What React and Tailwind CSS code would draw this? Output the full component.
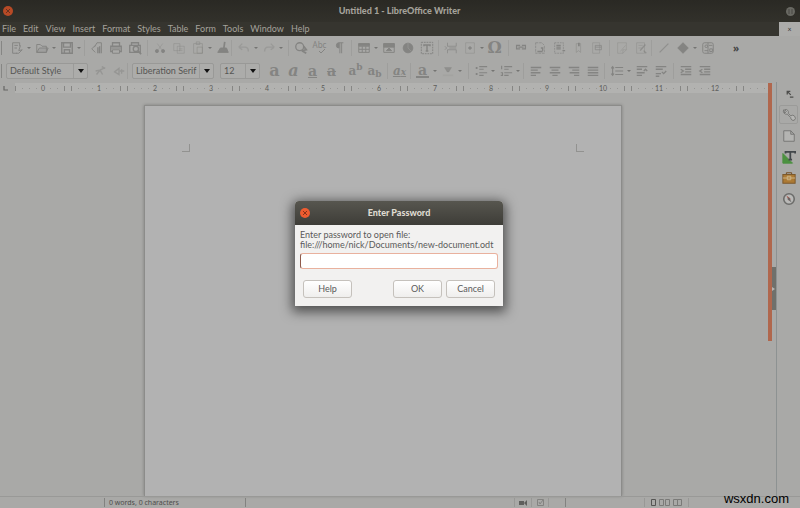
import React from "react";

const ICONS = {
  new: <><path d="M3 2h8v4M3 2v12h5" /><path d="M5 5h4M5 8h3" /><path d="M12 5l-2 6 4-1-4 4H7" /></>,
  open: <><path d="M2 13V4h4l2 2h5v7z" /><path d="M2 13l3-5h10l-2 5z" fill="currentColor" fillOpacity=".25" /></>,
  save: <><path d="M2 2h12v12H2z" strokeWidth="1.6" /><path d="M4 2v5h8V2M5 14v-4h6v4" strokeWidth="1.6" /></>,
  pdf: <><path d="M8 2h5v12M8 2L5 7M2 9l4-4M2 9l4 4" /><path d="M9 7v7M11 6v8" strokeWidth="1.6" /></>,
  print: <><path d="M4 6V2h8v4M2 6h12v6H2z" strokeWidth="1.5" /><path d="M4 10h8v4H4z" fill="#aaaaa8" /><path d="M3 8h10" /></>,
  preview: <><path d="M4 5V2h8v3M2 5h12v8H2z" strokeWidth="1.5" /><circle cx="9" cy="9" r="3" strokeWidth="1.5" /><path d="M11 11l4 4" strokeWidth="1.8" /></>,
  cut: <g strokeOpacity=".8"><path d="M5 3l5 7M11 3l-5 7" strokeOpacity=".4" /><circle cx="4.500" cy="11.500" r="1.800" fill="currentColor" /><circle cx="11.500" cy="11.500" r="1.800" fill="currentColor" /></g>,
  copy: <g strokeOpacity=".4"><path d="M2 3h7v8H2zM6 6h8v8H6z" /><path d="M8 9h4M8 11h4" /></g>,
  paste: <g strokeOpacity=".5"><path d="M3 3h10v11H3zM6 1h4v3H6z" /><path d="M7 7h6v7H7z" /></g>,
  clone: <><path d="M10 1l-1 7" strokeWidth="2" /><path d="M5 8h7l2 5H2z" fill="currentColor" /></>,
  undo: <path d="M2 7l4-4M2 7l4 3M2 7h7c3 0 4 2 4 5" strokeWidth="1.600" strokeOpacity=".4" />,
  redo: <path d="M14 7l-4-4M14 7l-4 3M14 7H7c-3 0-4 2-4 5" strokeWidth="1.600" strokeOpacity=".4" />,
  find: <><circle cx="6.500" cy="6.500" r="4.500" strokeWidth="1.500" /><path d="M9 11l5 3M11 6l3 4-5 1" strokeWidth="2" /></>,
  pilcrow: <><path d="M8 2a3 3 0 0 0 0 6z" fill="currentColor" /><path d="M8 2h5M9 2v12M11 2v12" /></>,
  table: <><path d="M2 3h12v10H2zM2 6h12M2 9.500h12M6 6v7M10 6v7" /><path d="M2 3h12v2H2z" fill="currentColor" /></>,
  image: <><path d="M2 3h12v10H2z" /><path d="M2 3h12v4H2z" fill="currentColor" /><path d="M5 11h6l-3-3z" fill="currentColor" /></>,
  chart: <><circle cx="8" cy="8" r="5.500" fill="currentColor" /><path d="M8 8V2M8 8l4 4" stroke="#939391" /></>,
  textbox: <><path d="M1.500 1.500h13v13h-13z" strokeDasharray="2 1" /><path d="M4.500 6V4.500h7V6M8 4.500v7M6.500 11.500h3" strokeWidth="1.600" /></>,
  pagebreak: <path d="M4 2v4h10V2M4 14v-4h10v4M6 8h8M1 6l2 2-2 2" strokeOpacity=".7" />,
  field: <><path d="M3 2h10v12H3z" strokeOpacity=".4" /><path d="M6 8h4M8 6v4" strokeWidth="1.600" /></>,
  link: <path d="M7 5H3v4h4M9 5h4v4H9M5 7h6" strokeWidth="1.500" />,
  footnote: <><path d="M3 2h7l3 3v9H3z" strokeDasharray="3 1" strokeOpacity=".7" /><path d="M5 12h6M9 8h2v3" strokeWidth="1.500" /></>,
  endnote: <><path d="M3 2h10v12H3z" strokeDasharray="2 1" strokeOpacity=".7" /><path d="M5 5h5M5 7h5M5 9h5M12 11h3" strokeWidth="1.400" /></>,
  bookmark: <><path d="M6 3h5v10l-2.500-2L6 13z" strokeOpacity=".5" /><path d="M9 2v4" strokeWidth="2" /></>,
  crossref: <><path d="M3 2h8v12H3z" strokeOpacity=".4" /><path d="M6 5h7v5H6zM6 7h7" strokeOpacity=".7" /></>,
  comment: <path d="M3 2h10v8l-4 4H3zM9 14v-4h4M6 12l6-7" strokeOpacity=".35" />,
  track: <><path d="M3 2h9v12H3zM5 5h5M5 8h4" strokeOpacity=".4" /><path d="M7 11l6-7M11 11l3 3" strokeWidth="1.600" strokeOpacity=".7" /></>,
  line: <path d="M3 13L13 3" strokeWidth="1.400" strokeOpacity=".7" />,
  diamond: <path d="M8 2l6 6-6 6-6-6z" fill="currentColor" />,
  draw: <><rect x="2" y="2" width="12" height="12" rx="2" /><circle cx="6" cy="6" r="1.500" /><path d="M9 5h4M4 11h4M10 9h3v3h-3zM8 2v12" /></>,
  styleUpdate: <path d="M4 12l4-5 4-2M8 7l-5 1M8 7l3 5M10 3l4 2" strokeWidth="1.600" strokeOpacity=".5" />,
  styleNew: <path d="M3 9l5-4v7zM9 8h5M11 6v5" strokeWidth="1.500" strokeOpacity=".5" />,
  highlight: <><path d="M4 4h8l-3 5H7z" fill="currentColor" fillOpacity=".7" strokeOpacity=".3" /><path d="M2 13h12" strokeWidth="2" strokeOpacity=".15" /></>,
  bullets: <><path d="M6 3h9M6 6h5M6 10h9M6 13h5" strokeWidth="1.300" /><path d="M2 4.500h2M2 11.500h2" strokeWidth="2.400" /></>,
  numbers: <><path d="M6 3h9M6 6h5M6 10h9M6 13h5" strokeWidth="1.300" /><path d="M3 2v4M2 10h2v3H2" strokeWidth="1.300" /></>,
  left: <path d="M2 4h12M2 7h8M2 10h11M2 13h6" strokeWidth="1.600" />,
  center: <path d="M2 4h12M4 7h8M2 10h12M5 13h6" strokeWidth="1.600" />,
  right: <path d="M2 4h12M6 7h8M3 10h11M8 13h6" strokeWidth="1.600" />,
  justify: <path d="M2 4h12M2 7h12M2 10h12M2 13h12" strokeWidth="1.600" />,
  spacing: <path d="M6 4h9M6 8h9M6 12h9M3 3v10M1.500 5L3 3l1.500 2M1.500 11L3 13l1.500-2" strokeWidth="1.300" />,
  paraUp: <path d="M2 3h12M2 6h6M2 10h9M2 13h6M10 8l2-2 2 2" strokeWidth="1.500" />,
  paraDown: <path d="M2 3h12M2 6h8M2 11h6M2 14h4M9 9l2 2 3-3" strokeWidth="1.500" />,
  indent: <path d="M2 3h12M7 6h7M7 9h7M2 12h12M2 6l3 2-3 2" strokeWidth="1.500" />,
  outdent: <path d="M2 3h12M7 6h7M7 9h7M2 12h12M5 6L2 8l3 2" strokeWidth="1.500" />,
};

const GLYPHS = {
  bold: <span className="text-base font-bold">a</span>,
  italic: <span className="text-base font-bold italic">a</span>,
  underline: <span className="text-sm font-bold underline">a</span>,
  strike: <span className="text-sm font-bold line-through">a</span>,
  superscript: <span className="text-xs font-bold">a<sup className="text-[9px]">b</sup></span>,
  subscript: <span className="text-xs font-bold">a<sub className="text-[9px]">b</sub></span>,
  clear: <span className="text-xs font-bold italic underline">a<span className="text-[9px]">x</span></span>,
  color: <span className="border-b-2 border-[#848482] px-0.5 text-sm leading-3 font-bold">a</span>,
  omega: <span className="text-base font-bold">Ω</span>,
  spelling: (
    <span className="flex flex-col items-end font-['Noto_Sans',sans-serif] text-[8px] leading-[8px]">
      Abc
      <svg width="8" height="5" viewBox="0 0 8 5"><path d="M1 2l2 2 4-4" fill="none" stroke="currentColor" /></svg>
    </span>
  ),
};

const STANDARD = [
  { w: "w-20", items: ["new", "|", "open", "|", "save", "|"] },
  { w: "w-[63px]", items: ["pdf", "print", "preview"] },
  { w: "w-[84px]", items: ["cut", "copy", "paste", "|", "clone"] },
  { w: "w-[57px]", items: ["undo", "|", "redo", "|"] },
  { w: "w-[63px]", items: ["find", "spelling", "pilcrow"] },
  { w: "w-[87px]", items: ["table", "|", "image", "chart", "textbox"] },
  { w: "w-[70px]", items: ["pagebreak", "field", "|", "omega"] },
  { w: "w-[101px]", items: ["link", "footnote", "endnote", "bookmark", "crossref"] },
  { w: "w-[42px]", items: ["comment", "track"] },
];

const FORMATTING = [
  { w: "w-[81px]", items: ["bold", "italic", "underline", "strike"], open: true },
  { w: "w-11", items: ["superscript", "subscript"] },
  { w: "w-[23px]", items: ["clear"] },
  { w: "w-[58px]", items: ["color", "|", "highlight", "|"] },
  { w: "w-[55px]", items: ["bullets", "|", "numbers", "|"] },
  { w: "w-[81px]", items: ["left", "center", "right", "justify"] },
  { w: "w-[69px]", items: ["spacing", "|", "paraUp", "paraDown"] },
];

function Tool({ name }) {
  if (name === "|")
    return (
      <button aria-label="More options" className="flex w-[6px] shrink-0 items-center justify-center">
        <svg width="4" height="2" viewBox="0 0 4 2"><path d="M0 0h4L2 2z" fill="#757573" /></svg>
      </button>
    );
  return (
    <button aria-label={name} className="flex h-4 w-[19px] shrink-0 items-center justify-center font-['DejaVu_Serif',serif] leading-none whitespace-nowrap text-[#848482]">
      {GLYPHS[name] || (
        <svg width="14" height="14" viewBox="0 0 16 16" fill="none" stroke="currentColor" strokeWidth="1.1">{ICONS[name]}</svg>
      )}
    </button>
  );
}

function Group({ w = "", items, open }) {
  return (
    <div className={`flex h-4 shrink-0 items-center pl-0.5 ${w} ${open ? "" : "border-r border-[#9e9e9c]"}`}>
      {items.map((name, i) => <Tool key={i} name={name} />)}
    </div>
  );
}

function Toolbar({ children }) {
  return (
    <div className="flex h-[23px] shrink-0 items-center">
      <span className="ml-px h-[14px] w-px shrink-0 bg-[#868684]" />
      {children}
    </div>
  );
}

function Combo({ label, value, className }) {
  return (
    <div className={`relative shrink-0 ${className}`}>
      <select aria-label={label} className="h-4 w-full appearance-none rounded-xs border border-[#999997] bg-[#acacaa] pr-4 pl-[3px] text-[9px] text-[#565654]">
        <option>{value}</option>
      </select>
      <span className="pointer-events-none absolute inset-y-px right-px flex w-[14px] items-center justify-center border-l border-[#9b9b99]">
        <svg width="6" height="4" viewBox="0 0 6 4"><path d="M0 0h6L3 4z" fill="#111" /></svg>
      </span>
    </div>
  );
}

function Ruler() {
  return (
    <div className="flex h-[10px] items-stretch">
      <div className="flex w-[15px] shrink-0 items-center pl-[3px]">
        <svg width="5" height="5" viewBox="0 0 5 5"><path d="M1 0v4h4" fill="none" stroke="#666664" strokeWidth="1.2" /></svg>
      </div>
      <div className="flex min-w-0 flex-1 overflow-hidden bg-[#b2b2b0]">
        <svg className="w-6 shrink-0" height="10" viewBox="0 0 24 10">
          <path d="M0.500 3v5" stroke="#868684" /><path d="M7 5.500h1M14 5.500h1M21 5.500h1" stroke="#969694" />
        </svg>
        {Array.from({ length: 13 }, (_, n) => (
          <div key={n} className="flex w-14 shrink-0 items-center">
            <span className="w-2 shrink-0 text-center text-[7px] leading-[10px] text-[#5c5c5a]">{n}</span>
            <svg className="w-12 shrink-0" height="10" viewBox="0 0 48 10">
              <path d="M17.500 3v5M24.500 3v5" stroke="#868684" />
              <path d="M3 5.500h1M10 5.500h1M31 5.500h1M38 5.500h1M45 5.500h1" stroke="#969694" />
            </svg>
          </div>
        ))}
      </div>
    </div>
  );
}

function SideButton({ label, children, active }) {
  return (
    <button aria-label={label} className={`flex h-[19px] w-[19px] items-center justify-center ${active ? "rounded-xs border border-[#9b9b99]" : ""}`}>
      <svg width="14" height="14" viewBox="0 0 16 16" fill="none" stroke="#777775" strokeWidth="1.1">{children}</svg>
    </button>
  );
}

function Sidebar() {
  return (
    <aside className="flex w-6 shrink-0 flex-col items-center gap-0.5 border-l border-[#8d9292] pt-0.5">
      <SideButton label="Sidebar settings"><path d="M6 5l4 4M6 8.500V5h3.500M9 11.500h4" stroke="#4d4d4b" strokeWidth="1.500" /></SideButton>
      <SideButton label="Properties" active>
        <path d="M2 2a3.500 3.500 0 0 0 4 5l4 4a3 3 0 0 0 4 3 3 3 0 0 0-4-5L7 6a3 3 0 0 0-4-4l2 2-2 2z" fill="#b6b6b4" />
      </SideButton>
      <SideButton label="Page"><path d="M2 2h8l4 4v8H2zM10 2v4h4" fill="#b4b4b2" /></SideButton>
      <SideButton label="Styles">
        <path d="M1 4l11 11H1z" fill="#4c9140" stroke="#4c9140" />
        <path d="M4 4V2h11v2M9.500 2v9M7.500 11h4" stroke="#42474b" strokeWidth="2" />
      </SideButton>
      <SideButton label="Gallery">
        <path d="M5 4V2h6v2" stroke="#704a20" />
        <rect x="1" y="4" width="14" height="10" fill="#ac7a34" stroke="#7b582c" />
        <path d="M1 8h14M6 6h4v4H6z" stroke="#cdb587" />
      </SideButton>
      <SideButton label="Navigator">
        <circle cx="8" cy="8" r="6" fill="#b9b9b7" stroke="#6c6c6a" strokeWidth="1.800" />
        <path d="M5 4l5 4-2 2z" fill="#a04b41" stroke="none" /><path d="M11 12L6 8l2-2z" fill="#666" stroke="none" />
      </SideButton>
    </aside>
  );
}

function TitleClose({ dim }) {
  return (
    <button aria-label="Close" className={`flex size-[10px] shrink-0 items-center justify-center rounded-full ${dim ? "bg-[#b74a26]" : "bg-[#ee5c30]"}`}>
      <svg width="4" height="4" viewBox="0 0 4 4"><path d="M0 0l4 4M4 0L0 4" stroke={dim ? "#69301f" : "#8a3218"} /></svg>
    </button>
  );
}

function PasswordDialog() {
  const button = "h-[18px] rounded-[3px] border border-[#c5c1bc] bg-linear-to-b from-white to-[#efeeed] text-[9px] text-[#5a5a5a]";
  return (
    <div className="absolute inset-0 flex items-center justify-center pr-0.5 pb-0.5">
      <form role="dialog" aria-labelledby="dialog-title" className="w-[208px] rounded-t-[4px] bg-[#f2f1f0] shadow-[0_3px_12px_3px_rgba(0,0,0,0.55)]" onSubmit={(e) => e.preventDefault()}>
        <header className="flex h-6 items-center rounded-t-[4px] bg-linear-to-b from-[#57564f] to-[#3e3d38] px-[5px]">
          <TitleClose />
          <h2 id="dialog-title" className="flex-1 pr-[10px] text-center text-[9px] font-black text-[#dfdbd2]">Enter Password</h2>
        </header>
        <div className="px-[5px] pt-[5px] pb-2">
          <label htmlFor="password" className="block text-[9px] leading-[10px] whitespace-nowrap text-[#5a5a5a]">
            Enter password to open file:<br />file:///home/nick/Documents/new-document.odt
          </label>
          <input id="password" type="password" className="mt-[3px] block h-4 w-full rounded-[3px] border border-[#e9b19e] border-l-[#8f5a4b] bg-white px-1 text-[9px] outline-none" />
          <div className="mt-[11px] flex gap-1 px-[3px]">
            <button type="button" className={`${button} mr-auto w-[49px]`}>Help</button>
            <button type="submit" className={`${button} w-[49px]`}>OK</button>
            <button type="button" className={`${button} w-[49px]`}>Cancel</button>
          </div>
        </div>
      </form>
    </div>
  );
}

export default function App() {
  const menus = ["File", "Edit", "View", "Insert", "Format", "Styles", "Table", "Form", "Tools", "Window", "Help"];
  return (
    <div className="relative flex h-screen flex-col overflow-hidden bg-[#a9a9a7] font-['Lato','Noto_Sans',sans-serif] text-[9px] text-[#4d4d4b]">
      <header className="flex h-[22px] shrink-0 items-center bg-linear-to-b from-[#2a2924] to-[#32312b] px-[3px]">
        <TitleClose dim />
        <h1 className="flex-1 text-center font-black text-[#a5a29b]">Untitled 1 - LibreOffice Writer</h1>
        <button aria-label="Session" className="mr-0.5 flex size-[9px] items-center justify-center rounded-full bg-[#696963]">
          <svg width="5" height="5" viewBox="0 0 5 5"><path d="M1 0v5M4 0v5" stroke="#4a4944" /></svg>
        </button>
      </header>
      <nav className="flex h-[14px] shrink-0 items-center bg-[#36352f] pl-0.5 text-[#a5a29b]">
        <div className="flex flex-1 items-center gap-[7px]">
          {menus.map((m) => <button key={m} className="leading-[14px]">{m}</button>)}
        </div>
        <button aria-label="Close document" className="h-full w-[21px] bg-[#acacaa] text-[7px] leading-[14px] text-[#333]">×</button>
      </nav>
      <Toolbar>
        <div className="w-[3px] shrink-0" />
        {STANDARD.map((g, i) => <Group key={i} {...g} />)}
        <Group w="w-[74px]" open items={["line", "diamond", "|", "draw"]} />
        <button aria-label="More tools" className="w-5 text-center font-['Noto_Sans',sans-serif] text-[10px] leading-none font-bold text-[#444]">»</button>
      </Toolbar>
      <Toolbar>
        <Combo label="Paragraph style" value="Default Style" className="ml-1 w-[82px]" />
        <Group w="w-[40px]" items={["styleUpdate", "styleNew"]} />
        <Combo label="Font name" value="Liberation Serif" className="ml-1 w-[82px]" />
        <Combo label="Font size" value="12" className="ml-[6px] w-10" />
        <div className="w-[3px] shrink-0" />
        {FORMATTING.map((g, i) => <Group key={i} {...g} />)}
        <Group open items={["indent", "outdent"]} />
      </Toolbar>
      <div className="flex min-h-0 flex-1">
        <main className="flex min-w-0 flex-1 flex-col pt-px">
          <Ruler />
          <div className="flex min-h-0 flex-1 justify-center pt-3 pr-0.5">
            <section aria-label="Document page" className="flex w-[478px] items-start justify-between border border-b-0 border-[#8c8c8a] bg-[#b2b2b2] px-[37px] pt-[38px] shadow-[0_0_3px_rgba(0,0,0,0.25)]">
              <span className="size-2 border-r border-b border-[#929290]" />
              <span className="size-2 border-b border-l border-[#929290]" />
            </section>
          </div>
        </main>
        <div className="flex w-2 shrink-0 pt-px">
          <div className="h-[258px] w-1 shrink-0 bg-[#b0674d]" />
          <button aria-label="Hide sidebar" className="mt-[184px] flex h-[43px] w-1 items-center bg-[#70706b]">
            <svg width="4" height="4" viewBox="0 0 4 4"><path d="M0 0l3 2-3 2z" fill="#b5b5b3" /></svg>
          </button>
        </div>
        <Sidebar />
      </div>
      <footer className="flex h-3 shrink-0 items-center border-t border-[#999997] text-[#4d4d4b]">
        <div className="h-[9px] w-[105px] border-r border-[#828280]" />
        <div className="w-[141px] border-r border-[#828280] pl-1 font-['Noto_Sans',sans-serif] text-[7px] leading-[9px]">0 words, 0 characters</div>
        <div className="h-[9px] flex-1 border-r border-[#989896]" />
        <div className="flex h-[9px] w-[17px] items-center justify-center border-r border-[#989896]">
          <svg width="8" height="6" viewBox="0 0 8 6"><path d="M0 1h5v4H0zM8 0v6L5 3z" fill="#5f5f5d" /></svg>
        </div>
        <div className="flex h-[9px] w-[17px] items-center justify-center border-r border-[#989896]">
          <svg width="7" height="7" viewBox="0 0 7 7"><path d="M.5.5h6v6h-6zM2 3l1 2 3-4" fill="none" stroke="#838381" /></svg>
        </div>
        <div className="h-[9px] w-[17px] border-r border-[#828280]" />
        <div className="h-[9px] w-[79px] border-r border-[#989896]" />
        <div className="flex h-[9px] w-[44px] items-center justify-center border-r border-[#989896]">
          <svg width="33" height="7" viewBox="0 0 33 7">
            <path d="M1.500.5h4v6h-4z" fill="none" stroke="#555553" />
            <path d="M9.500.5h4v6h-4zM15.500.5h4v6h-4zM23.500.5h4v6h-4zM27.500.5h4v6h-4z" fill="none" stroke="#7a7a78" />
          </svg>
        </div>
        <div className="w-[111px]" />
      </footer>
      <PasswordDialog />
      <div className="absolute right-[11px] bottom-px font-['Liberation_Sans',sans-serif] text-[13px] leading-4 text-black">wsxdn.com</div>
    </div>
  );
}
